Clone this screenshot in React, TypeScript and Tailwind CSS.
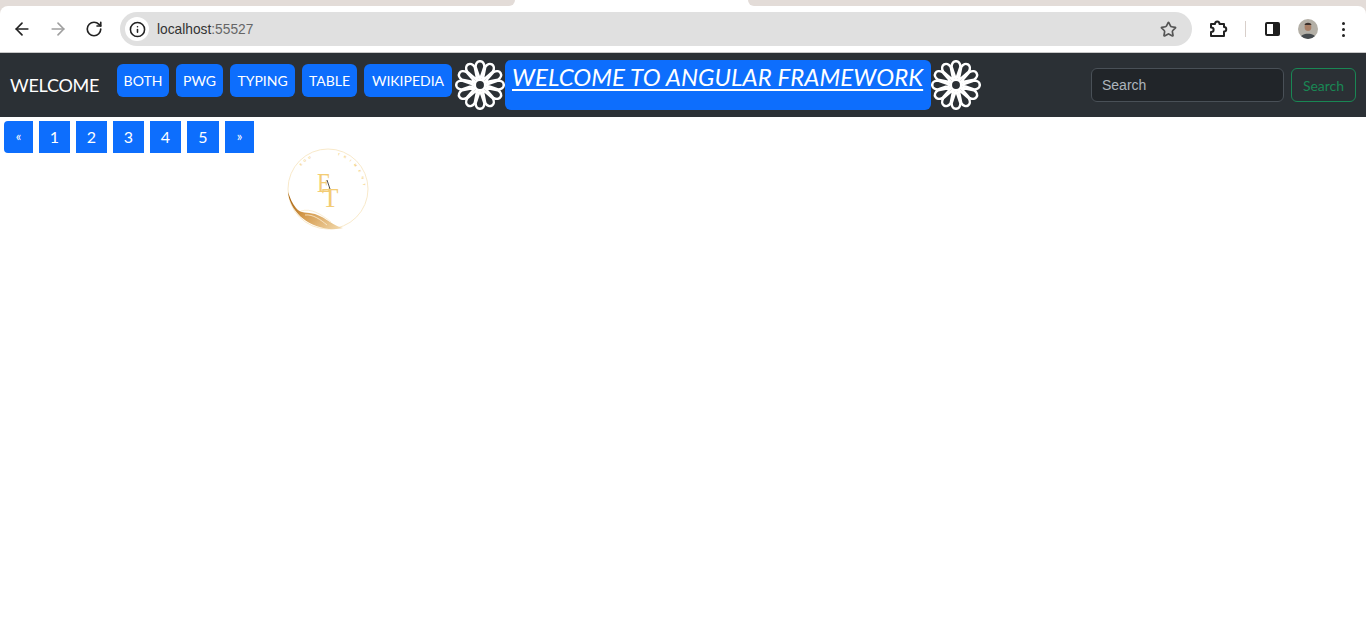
import { ArrowLeft, ArrowRight, Info, RotateCw, Star } from "lucide-react";

const NAV_LINKS = [
  { label: "BOTH", width: "w-[52px]" },
  { label: "PWG", width: "w-[47px]" },
  { label: "TYPING", width: "w-[65px]" },
  { label: "TABLE", width: "w-[55px]" },
  { label: "WIKIPEDIA", width: "w-[88px]" },
];
const PAGES = ["1", "2", "3", "4", "5"];
const PETALS = [0, 30, 60, 90, 120, 150, 180, 210, 240, 270, 300, 330];

function Flower() {
  return (
    <svg viewBox="0 0 50 50" className="h-[50px] w-[50px] shrink-0" fill="none" stroke="white">
      {PETALS.map((a) => (
        <path
          key={a}
          d="M25 20 L20.6 7 C20.6 -0.7 29.4 -0.7 29.4 7 Z"
          strokeWidth="2.5"
          strokeLinejoin="round"
          transform={`rotate(${a} 25 25)`}
        />
      ))}
      <circle cx="25" cy="25" r="5.2" strokeWidth="2.5" fill="#2b3035" />
    </svg>
  );
}

function Logo() {
  return (
    <svg viewBox="0 0 82 82" className="h-[82px] w-[82px]" fill="none">
      <defs>
        <linearGradient id="swoosh" x1="0" y1="0.2" x2="1" y2="0.9">
          <stop offset="0" stopColor="#a8640f" />
          <stop offset="0.4" stopColor="#d59a4c" />
          <stop offset="1" stopColor="#f0d6a8" />
        </linearGradient>
        <path id="ring" d="M14 18 A35.5 35.5 0 0 1 76 46" />
      </defs>
      <circle cx="41" cy="41" r="40" stroke="#f6e3bd" strokeWidth="0.8" />
      <path d="M1 44 C3 62 18 78 42 81 C48 81.500 52 81 56 80 C46 78 40 70 28 66 C20 64 14 66 9 60 C5 55 3 50 1 44 Z" fill="url(#swoosh)" />
      <path d="M14 63 C24 60 34 66 44 74" stroke="#fbeed3" strokeWidth="1" />
      <path d="M18 67 C26 66 34 72 40 77" stroke="#fbeed3" strokeWidth="0.8" />
      <text x="30" y="44" fontFamily="'Liberation Serif', serif" fontSize="28" fill="#f3cc74" textLength="14" lengthAdjust="spacingAndGlyphs">E</text>
      <text x="35" y="59" fontFamily="'Liberation Serif', serif" fontSize="27" fill="#f3cc74">T</text>
      <path d="M40 32 L43 41" stroke="#222" strokeWidth="0.8" />
      <text fontFamily="'Liberation Sans', sans-serif" fontSize="3.2" fontWeight="700" fill="#f3cc74" letterSpacing="3">
        <textPath href="#ring">EOU</textPath>
      </text>
      <text fontFamily="'Liberation Sans', sans-serif" fontSize="3.2" fontWeight="700" fill="#f3cc74" letterSpacing="4.6">
        <textPath href="#ring" startOffset="40">TRIMENT</textPath>
      </text>
    </svg>
  );
}

function ExtensionIcon() {
  return (
    <svg viewBox="0 0 20 20" className="ml-[16px] h-[20px] w-[20px] text-[#222]" fill="none" stroke="currentColor" strokeWidth="2" strokeLinejoin="round">
      <path d="M3 5 H7 C7 1.500 11.500 1.500 11.500 5 H16 V8 C19 8 19 12.500 16 12.500 V17 H3 V13 C6.500 13 6.500 8.500 3 8.500 Z" />
    </svg>
  );
}

function Avatar() {
  return (
    <svg viewBox="0 0 20 20" className="ml-[18px] h-[20px] w-[20px] rounded-full">
      <rect width="20" height="20" fill="#b3afa6" />
      <ellipse cx="10" cy="8" rx="3.400" ry="4" fill="#a87f66" />
      <path d="M6.500 6 C7 3 13 3 13.500 6 Z" fill="#3a2f2a" />
      <path d="M2 20 C2 13 18 13 18 20 Z" fill="#454a4e" />
    </svg>
  );
}

function BrowserBar() {
  return (
    <div className="bg-[#e3dcd8]">
      <div className="flex h-[6px] bg-white">
        <div className="w-[515px] rounded-br-[8px] bg-[#e3dcd8]" />
        <div className="w-[233px]" />
        <div className="flex-1 rounded-bl-[8px] bg-[#e3dcd8]" />
      </div>
      <div className="flex h-[46px] items-center rounded-t-[8px] bg-white pl-[12px] pr-[21px]">
        <ArrowLeft size={20} strokeWidth={2} className="text-[#222]" />
        <ArrowRight size={20} strokeWidth={2} className="ml-[16px] text-[#a0a0a0]" />
        <RotateCw size={18} strokeWidth={2.2} className="ml-[17px] text-[#222]" />
        <div className="ml-[17px] flex h-[34px] flex-1 items-center rounded-full bg-[#e0e0e0] pl-[5px] pr-[15px]">
          <div className="flex h-[24px] w-[24px] items-center justify-center rounded-full bg-white">
            <Info size={17} strokeWidth={2.2} className="text-[#222]" />
          </div>
          <span className="ml-[8px] pt-[2px] text-[13.75px] text-[#333] font-['Liberation_Sans',sans-serif]">
            localhost<span className="text-[#666]">:55527</span>
          </span>
          <Star size={17} strokeWidth={2.4} className="ml-auto text-[#555]" />
        </div>
        <ExtensionIcon />
        <div className="ml-[17px] h-[16px] w-px bg-[#d8cfca]" />
        <div className="ml-[19px] flex h-[14px] w-[15px] overflow-hidden rounded-[2px] border-2 border-[#1f1f1f]">
          <div className="flex-1 bg-white" />
          <div className="w-[5px] bg-[#1f1f1f]" />
        </div>
        <Avatar />
        <div className="ml-[24px] flex flex-col gap-[3px]">
          <div className="h-[3px] w-[3px] rounded-full bg-[#222]" />
          <div className="h-[3px] w-[3px] rounded-full bg-[#222]" />
          <div className="h-[3px] w-[3px] rounded-full bg-[#222]" />
        </div>
      </div>
    </div>
  );
}

export default function App() {
  return (
    <div className="min-h-[629px] bg-white font-['Lato',sans-serif]">
      <BrowserBar />

      <nav className="flex h-[65px] items-center border-t border-[#c8c8c8] bg-[#2b3035] pl-[10px] pr-[10px]">
        <a className="w-[107px] shrink-0 text-[18px] leading-[30px] tracking-[-0.25px] text-white">WELCOME</a>
        <div className="mb-[9px] flex gap-[7px]">
          {NAV_LINKS.map((l) => (
            <button key={l.label} className={`h-[33px] rounded-[6px] bg-[#0d6efd] text-[14px] text-white ${l.width}`}>
              {l.label}
            </button>
          ))}
        </div>
        <div className="ml-[3px] flex items-center">
          <Flower />
          <h1 className="h-[50px] w-[426px] rounded-[6px] bg-[#0d6efd] pl-[7px] text-[24px] italic leading-[33px] tracking-[0.08px] whitespace-nowrap text-white underline decoration-2 underline-offset-[3px]">
            WELCOME TO ANGULAR FRAMEWORK
          </h1>
          <Flower />
        </div>
        <form className="ml-auto flex gap-[7px]">
          <div className="flex h-[34px] w-[193px] items-center rounded-[6px] border border-[#495057] bg-[#212529] px-[10px] font-['Liberation_Sans',sans-serif] text-[14px] text-[#adb5bd]">
            Search
          </div>
          <div className="flex h-[34px] w-[65px] items-center justify-center rounded-[6px] border border-[#198754] text-[14px] text-[#198754]">
            Search
          </div>
        </form>
      </nav>

      <div className="flex items-start pl-[4px] pt-[4px]">
        <div className="flex gap-[6px]">
          <div className="flex h-[32px] w-[29px] items-center justify-center rounded-l-[4px] bg-[#0d6efd] text-[13px] text-white">«</div>
          {PAGES.map((p) => (
            <div key={p} className={`flex h-[32px] items-center justify-center bg-[#0d6efd] text-[16px] text-white ${p === "5" ? "w-[32px]" : "w-[31px]"}`}>
              {p}
            </div>
          ))}
          <div className="flex h-[32px] w-[29px] items-center justify-center bg-[#0d6efd] text-[13px] text-white">»</div>
        </div>
        <div className="ml-[33px] mt-[27px]">
          <Logo />
        </div>
      </div>
    </div>
  );
}
